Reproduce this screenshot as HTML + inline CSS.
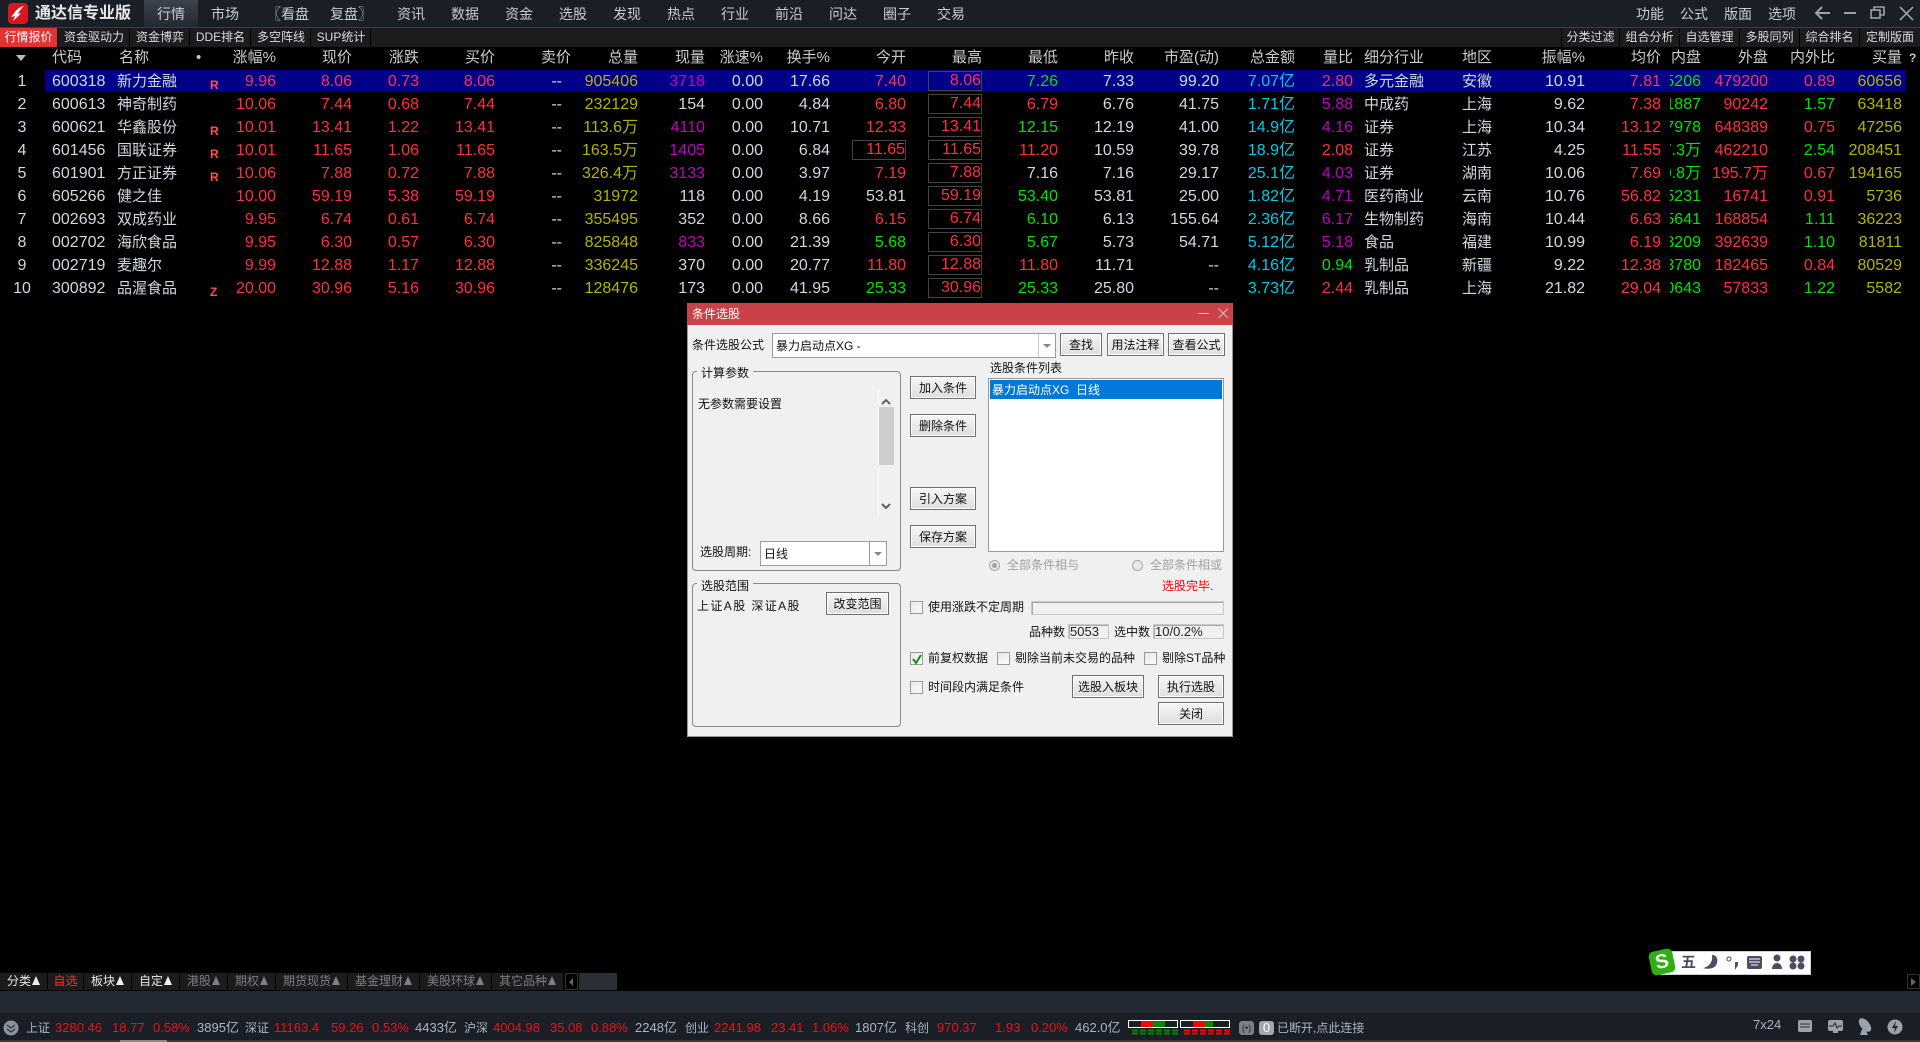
<!DOCTYPE html>
<html lang="zh"><head><meta charset="utf-8"><title>通达信专业版</title>
<style>
html,body{margin:0;padding:0;background:#000}
body{width:1920px;height:1042px;position:relative;overflow:hidden;font-family:"Liberation Sans","Noto Sans CJK SC",sans-serif;color:#d0d8e0}
div,.t{position:absolute;white-space:nowrap;box-sizing:border-box}
/* title */
#top{left:0;top:0;width:1920px;height:28px;background:#1a1f27;border-bottom:1px solid #3a3f46}
.n{top:6px;font-size:14px;line-height:17px;color:#c8ccd0}
#sub{left:0;top:28px;width:1920px;height:19px;background:#1c1c1e}
.s{top:28px;height:19px;font-size:12px;line-height:19px;text-align:center;color:#d8dce0;background:#1c1c1e;border-right:1px solid #000}
/* table */
.h span,.r span{position:absolute;white-space:nowrap}
.h{left:0;top:50px;width:1920px;height:16px;font-size:15px;line-height:16px;color:#c8ccd0}
.r{left:0;width:1920px;height:23px;font-size:16px;line-height:24px;color:#d0d8e0}
.r span:nth-child(1){left:0;width:44px;text-align:center}
.r span:nth-child(2){left:52px}
.r span:nth-child(3){left:117px;font-size:15px}
.r span:nth-child(4){left:210px;top:3px;font-size:12px;font-weight:bold;color:#ff5050}
.r span:nth-child(5){right:1644px}.r span:nth-child(6){right:1568px}.r span:nth-child(7){right:1501px}
.r span:nth-child(8){right:1425px}.r span:nth-child(9){right:1358px}.r span:nth-child(10){right:1282px}
.r span:nth-child(11){right:1215px}.r span:nth-child(12){right:1157px}.r span:nth-child(13){right:1090px}
.r span:nth-child(14){right:1014px}.r span:nth-child(15){right:938px}.r span:nth-child(16){right:862px}
.r span:nth-child(17){right:786px}.r span:nth-child(18){right:701px}.r span:nth-child(19){right:625px}
.r span:nth-child(20){right:567px}.r span:nth-child(21){left:1364px;font-size:15px}.r span:nth-child(22){left:1462px;font-size:15px}
.r span:nth-child(23){right:335px}.r span:nth-child(24){right:259px}
.r span:nth-child(25){left:1670px;width:31px;overflow:hidden;display:flex;justify-content:flex-end}
.r span:nth-child(26){right:152px}.r span:nth-child(27){right:85px}.r span:nth-child(28){right:18px}
.r .bx{box-sizing:border-box;width:54px;height:20px;top:1px;border:1px solid #444;line-height:18px;text-align:right}
.R{color:#ff3038}.G{color:#00e400}.M{color:#c000c0}.O{color:#b4b400}.C{color:#00ccE4}
.sel .R{color:#ff3058}
/* dialog */
#dlg{left:687px;top:303px;width:546px;height:434px;background:#f0f0f0;border:1px solid #999;border-top:0}
.x{font-size:12px;line-height:16px;color:#111}
.btn{font-size:12px;line-height:22px;color:#111;text-align:center;border:1px solid #707070;box-shadow:inset 0 0 0 1px #fff;background:linear-gradient(#f6f6f6,#dedede)}
.grp{border:1px solid #8a8a8a;border-radius:4px}
.gt{font-size:12px;line-height:14px;background:#f0f0f0;padding:0 4px;color:#111}
.ck{left:910px;width:13px;height:13px;border:1px solid #9a9a9a;background:linear-gradient(135deg,#e8e8e8,#fafafa)}
.fld{border:1px solid #c8c8c8;background:#f0f0f0;font-size:13px;line-height:13px;color:#222;padding-left:1px;box-shadow:inset 1px 1px 0 #aaa}
/* bottom */
.b{top:973px;height:17px;background:#1c1c1e;font-size:12px;line-height:17px;text-align:center;color:#7a7f85}
.b i{display:inline-block;width:0;height:0;border-left:4px solid transparent;border-right:4px solid transparent;border-bottom:9px solid #7a7f85;margin-left:1px}
.b.w{color:#e8e8e8}.b.w i{border-bottom-color:#eee}
.st{top:1020px;font-size:13px;line-height:16px;color:#a8b4c4}
.sr{color:#f01010}
</style></head><body>

<div id="top"></div>
<svg style="position:absolute;left:8px;top:3px" width="20" height="21" viewBox="0 0 20 21"><rect width="20" height="21" rx="4" fill="#d8161c"/><path d="M16 3C12 4 9 6 7 9L3 14L7 13L5 18C8 15 11 13 13 10L10 11C11 8 14 5 16 3Z" fill="#fff"/></svg>
<div style="left:35px;top:4px;font-size:16px;line-height:19px;font-weight:bold;color:#e8e8e8">通达信专业版</div>
<div style="left:144px;top:0;width:54px;height:27px;background:linear-gradient(#3c444e,#232932)"></div>
<div class="n" style="left:157px">行情</div>
<div class="n" style="left:211px">市场</div>
<div class="n" style="left:267px">〖看盘</div>
<div class="n" style="left:330px">复盘〗</div>
<div class="n" style="left:397px">资讯</div>
<div class="n" style="left:451px">数据</div>
<div class="n" style="left:505px">资金</div>
<div class="n" style="left:559px">选股</div>
<div class="n" style="left:613px">发现</div>
<div class="n" style="left:667px">热点</div>
<div class="n" style="left:721px">行业</div>
<div class="n" style="left:775px">前沿</div>
<div class="n" style="left:829px">问达</div>
<div class="n" style="left:883px">圈子</div>
<div class="n" style="left:937px">交易</div>
<div class="n" style="left:1636px">功能</div>
<div class="n" style="left:1680px">公式</div>
<div class="n" style="left:1724px">版面</div>
<div class="n" style="left:1768px">选项</div>
<svg style="position:absolute;left:1812px;top:4px" width="106" height="20" viewBox="0 0 106 20" fill="none" stroke="#9aa2ac" stroke-width="1.6"><path d="M18 9H4M10 3L4 9l6 6" stroke-width="2"/><path d="M32 9H44" stroke-width="2"/><rect x="59" y="6" width="9" height="8"/><path d="M62 6V3h10v8h-4"/><path d="M88 3L101 16M101 3L88 16"/></svg>

<div id="sub"></div>
<div class="s" style="left:0;width:58px;background:#e03434;color:#fff">行情报价</div>
<div class="s" style="left:59px;width:71px">资金驱动力</div>
<div class="s" style="left:131px;width:59px">资金博弈</div>
<div class="s" style="left:191px;width:60px">DDE排名</div>
<div class="s" style="left:252px;width:59px">多空阵线</div>
<div class="s" style="left:312px;width:59px">SUP统计</div>
<div class="s" style="left:1561px;width:59px;border-left:1px solid #000">分类过滤</div>
<div class="s" style="left:1620px;width:60px">组合分析</div>
<div class="s" style="left:1680px;width:60px">自选管理</div>
<div class="s" style="left:1740px;width:60px">多股同列</div>
<div class="s" style="left:1800px;width:60px">综合排名</div>
<div class="s" style="left:1860px;width:60px;border-right:0">定制版面</div>

<div class="h">
<span style="left:16px;top:5px;width:0;height:0;border-left:5px solid transparent;border-right:5px solid transparent;border-top:6px solid #b8bcc0"></span>
<span style="left:52px">代码</span><span style="left:119px">名称</span><span style="left:196px">•</span>
<span style="right:1644px">涨幅%</span><span style="right:1568px">现价</span><span style="right:1501px">涨跌</span><span style="right:1425px">买价</span><span style="right:1349px">卖价</span><span style="right:1282px">总量</span><span style="right:1215px">现量</span><span style="right:1157px">涨速%</span><span style="right:1090px">换手%</span><span style="right:1014px">今开</span><span style="right:938px">最高</span><span style="right:862px">最低</span><span style="right:786px">昨收</span><span style="right:701px">市盈(动)</span><span style="right:625px">总金额</span><span style="right:567px">量比</span><span style="left:1364px">细分行业</span><span style="left:1462px">地区</span><span style="right:335px">振幅%</span><span style="right:259px">均价</span><span style="right:219px">内盘</span><span style="right:152px">外盘</span><span style="right:85px">内外比</span><span style="right:18px">买量</span><span style="left:1909px;font-size:12px;font-weight:bold">?</span>
</div>

<div style="left:45px;top:70px;width:1861px;height:22px;background:#000088"></div>
<div class="r sel" style="top:70px"><span>1</span><span>600318</span><span>新力金融</span><span>R</span><span class="R">9.96</span><span class="R">8.06</span><span class="R">0.73</span><span class="R">8.06</span><span>--</span><span class="O">905406</span><span class="M">3718</span><span>0.00</span><span>17.66</span><span class="R">7.40</span><span class="R bx">8.06</span><span class="G">7.26</span><span>7.33</span><span>99.20</span><span class="C">7.07亿</span><span class="R">2.80</span><span>多元金融</span><span>安徽</span><span>10.91</span><span class="R">7.81</span><span class="G">45206</span><span class="R">479200</span><span class="R">0.89</span><span class="O">60656</span></div>
<div class="r" style="top:93px"><span>2</span><span>600613</span><span>神奇制药</span><span></span><span class="R">10.06</span><span class="R">7.44</span><span class="R">0.68</span><span class="R">7.44</span><span>--</span><span class="O">232129</span><span>154</span><span>0.00</span><span>4.84</span><span class="R">6.80</span><span class="R bx">7.44</span><span class="R">6.79</span><span>6.76</span><span>41.75</span><span class="C">1.71亿</span><span class="M">5.88</span><span>中成药</span><span>上海</span><span>9.62</span><span class="R">7.38</span><span class="G">61887</span><span class="R">90242</span><span class="G">1.57</span><span class="O">63418</span></div>
<div class="r" style="top:116px"><span>3</span><span>600621</span><span>华鑫股份</span><span>R</span><span class="R">10.01</span><span class="R">13.41</span><span class="R">1.22</span><span class="R">13.41</span><span>--</span><span class="O">113.6万</span><span class="M">4110</span><span>0.00</span><span>10.71</span><span class="R">12.33</span><span class="R bx">13.41</span><span class="G">12.15</span><span>12.19</span><span>41.00</span><span class="C">14.9亿</span><span class="M">4.16</span><span>证券</span><span>上海</span><span>10.34</span><span class="R">13.12</span><span class="G">57978</span><span class="R">648389</span><span class="R">0.75</span><span class="O">47256</span></div>
<div class="r" style="top:139px"><span>4</span><span>601456</span><span>国联证券</span><span>R</span><span class="R">10.01</span><span class="R">11.65</span><span class="R">1.06</span><span class="R">11.65</span><span>--</span><span class="O">163.5万</span><span class="M">1405</span><span>0.00</span><span>6.84</span><span class="R bx">11.65</span><span class="R bx">11.65</span><span class="R">11.20</span><span>10.59</span><span>39.78</span><span class="C">18.9亿</span><span class="R">2.08</span><span>证券</span><span>江苏</span><span>4.25</span><span class="R">11.55</span><span class="G">17.3万</span><span class="R">462210</span><span class="G">2.54</span><span class="O">208451</span></div>
<div class="r" style="top:162px"><span>5</span><span>601901</span><span>方正证券</span><span>R</span><span class="R">10.06</span><span class="R">7.88</span><span class="R">0.72</span><span class="R">7.88</span><span>--</span><span class="O">326.4万</span><span class="M">3133</span><span>0.00</span><span>3.97</span><span class="R">7.19</span><span class="R bx">7.88</span><span>7.16</span><span>7.16</span><span>29.17</span><span class="C">25.1亿</span><span class="M">4.03</span><span>证券</span><span>湖南</span><span>10.06</span><span class="R">7.69</span><span class="G">10.8万</span><span class="R">195.7万</span><span class="R">0.67</span><span class="O">194165</span></div>
<div class="r" style="top:185px"><span>6</span><span>605266</span><span>健之佳</span><span></span><span class="R">10.00</span><span class="R">59.19</span><span class="R">5.38</span><span class="R">59.19</span><span>--</span><span class="O">31972</span><span>118</span><span>0.00</span><span>4.19</span><span>53.81</span><span class="R bx">59.19</span><span class="G">53.40</span><span>53.81</span><span>25.00</span><span class="C">1.82亿</span><span class="M">4.71</span><span>医药商业</span><span>云南</span><span>10.76</span><span class="R">56.82</span><span class="G">15231</span><span class="R">16741</span><span class="R">0.91</span><span class="O">5736</span></div>
<div class="r" style="top:208px"><span>7</span><span>002693</span><span>双成药业</span><span></span><span class="R">9.95</span><span class="R">6.74</span><span class="R">0.61</span><span class="R">6.74</span><span>--</span><span class="O">355495</span><span>352</span><span>0.00</span><span>8.66</span><span class="R">6.15</span><span class="R bx">6.74</span><span class="G">6.10</span><span>6.13</span><span>155.64</span><span class="C">2.36亿</span><span class="M">6.17</span><span>生物制药</span><span>海南</span><span>10.44</span><span class="R">6.63</span><span class="G">15641</span><span class="R">168854</span><span class="G">1.11</span><span class="O">36223</span></div>
<div class="r" style="top:231px"><span>8</span><span>002702</span><span>海欣食品</span><span></span><span class="R">9.95</span><span class="R">6.30</span><span class="R">0.57</span><span class="R">6.30</span><span>--</span><span class="O">825848</span><span class="M">833</span><span>0.00</span><span>21.39</span><span class="G">5.68</span><span class="R bx">6.30</span><span class="G">5.67</span><span>5.73</span><span>54.71</span><span class="C">5.12亿</span><span class="M">5.18</span><span>食品</span><span>福建</span><span>10.99</span><span class="R">6.19</span><span class="G">43209</span><span class="R">392639</span><span class="G">1.10</span><span class="O">81811</span></div>
<div class="r" style="top:254px"><span>9</span><span>002719</span><span>麦趣尔</span><span></span><span class="R">9.99</span><span class="R">12.88</span><span class="R">1.17</span><span class="R">12.88</span><span>--</span><span class="O">336245</span><span>370</span><span>0.00</span><span>20.77</span><span class="R">11.80</span><span class="R bx">12.88</span><span class="R">11.80</span><span>11.71</span><span>--</span><span class="C">4.16亿</span><span class="G">0.94</span><span>乳制品</span><span>新疆</span><span>9.22</span><span class="R">12.38</span><span class="G">13780</span><span class="R">182465</span><span class="R">0.84</span><span class="O">80529</span></div>
<div class="r" style="top:277px"><span>10</span><span>300892</span><span>品渥食品</span><span>Z</span><span class="R">20.00</span><span class="R">30.96</span><span class="R">5.16</span><span class="R">30.96</span><span>--</span><span class="O">128476</span><span>173</span><span>0.00</span><span>41.95</span><span class="G">25.33</span><span class="R bx">30.96</span><span class="G">25.33</span><span>25.80</span><span>--</span><span class="C">3.73亿</span><span class="R">2.44</span><span>乳制品</span><span>上海</span><span>21.82</span><span class="R">29.04</span><span class="G">10643</span><span class="R">57833</span><span class="G">1.22</span><span class="O">5582</span></div>

<!-- dialog -->
<div id="dlg"></div>
<div style="left:687px;top:303px;width:546px;height:22px;background:#c94247"></div>
<div class="x" style="left:692px;top:306px;color:#fff">条件选股</div>
<svg style="position:absolute;left:1196px;top:306px" width="34" height="14" fill="none" stroke="#e8c0c0"><path d="M2 7.5H13M22.5 2.5L32 12M32 2.500L22.500 12"/></svg>

<div class="x" style="left:692px;top:337px">条件选股公式</div>
<div style="left:772px;top:333px;width:284px;height:25px;background:#fff;border:1px solid #9a9a9a"></div>
<div style="left:1038px;top:334px;width:1px;height:23px;background:#c8c8c8"></div>
<div style="left:1043px;top:344px;width:0;height:0;border-left:4px solid transparent;border-right:4px solid transparent;border-top:4px solid #888"></div>
<div class="x" style="left:776px;top:338px">暴力启动点XG -</div>
<div class="btn" style="left:1060px;top:333px;width:42px;height:23px">查找</div>
<div class="btn" style="left:1107px;top:333px;width:57px;height:23px">用法注释</div>
<div class="btn" style="left:1168px;top:333px;width:57px;height:23px">查看公式</div>

<div class="grp" style="left:692px;top:371px;width:209px;height:200px"></div>
<div class="gt" style="left:697px;top:366px">计算参数</div>
<div class="x" style="left:698px;top:396px">无参数需要设置</div>
<div style="left:878px;top:390px;width:1px;height:125px;background:#fff"></div>
<div style="left:879px;top:407px;width:15px;height:58px;background:#cdcdcd"></div>
<svg style="position:absolute;left:880px;top:396px" width="12" height="116" fill="none" stroke="#606060" stroke-width="2"><path d="M2 8L6 4L10 8M2 108L6 112L10 108"/></svg>
<div class="x" style="left:700px;top:544px">选股周期:</div>
<div style="left:760px;top:541px;width:127px;height:25px;background:#fff;border:1px solid #9a9a9a"></div>
<div style="left:869px;top:542px;width:1px;height:23px;background:#9a9a9a"></div>
<div style="left:874px;top:552px;width:0;height:0;border-left:4px solid transparent;border-right:4px solid transparent;border-top:4px solid #888"></div>
<div class="x" style="left:764px;top:546px">日线</div>

<div class="grp" style="left:692px;top:583px;width:209px;height:144px"></div>
<div class="gt" style="left:697px;top:579px">选股范围</div>
<div class="x" style="left:697px;top:598px;letter-spacing:1.4px">上证A股 深证A股</div>
<div class="btn" style="left:826px;top:592px;width:63px;height:23px">改变范围</div>

<div class="btn" style="left:910px;top:376px;width:66px;height:23px">加入条件</div>
<div class="btn" style="left:910px;top:414px;width:66px;height:23px">删除条件</div>
<div class="btn" style="left:910px;top:487px;width:66px;height:23px">引入方案</div>
<div class="btn" style="left:910px;top:525px;width:66px;height:23px">保存方案</div>

<div class="x" style="left:990px;top:360px">选股条件列表</div>
<div style="left:988px;top:378px;width:236px;height:174px;background:#fff;border:1px solid #9a9a9a"></div>
<div class="x" style="left:990px;top:380px;width:232px;height:19px;background:#0078d7;color:#fff;line-height:20px;padding-left:2px">暴力启动点XG&nbsp; 日线</div>

<div style="left:989px;top:560px;width:11px;height:11px;border-radius:50%;border:1px solid #a8a8a8;background:#e8e8e8"></div>
<div style="left:992px;top:563px;width:5px;height:5px;border-radius:50%;background:#a0a0a0"></div>
<div class="x" style="left:1007px;top:557px;color:#a0a0a0">全部条件相与</div>
<div style="left:1132px;top:560px;width:11px;height:11px;border-radius:50%;border:1px solid #a8a8a8;background:#e8e8e8"></div>
<div class="x" style="left:1150px;top:557px;color:#a0a0a0">全部条件相或</div>
<div class="x" style="left:1162px;top:578px;color:#f00">选股完毕.</div>

<div class="ck" style="top:601px"></div>
<div class="x" style="left:928px;top:599px">使用涨跌不定周期</div>
<div class="fld" style="left:1031px;top:601px;width:193px;height:14px"></div>
<div class="x" style="left:1029px;top:624px">品种数</div>
<div class="fld" style="left:1068px;top:624px;width:41px;height:15px">5053</div>
<div class="x" style="left:1114px;top:624px">选中数</div>
<div class="fld" style="left:1153px;top:624px;width:71px;height:15px">10/0.2%</div>

<div class="ck" style="top:652px"></div>
<svg style="position:absolute;left:911px;top:653px" width="12" height="12" fill="none" stroke="#1a8a1a" stroke-width="2"><path d="M2 6L5 10L10 2"/></svg>
<div class="x" style="left:928px;top:650px">前复权数据</div>
<div class="ck" style="left:997px;top:652px"></div>
<div class="x" style="left:1015px;top:650px">剔除当前未交易的品种</div>
<div class="ck" style="left:1144px;top:652px"></div>
<div class="x" style="left:1162px;top:650px">剔除ST品种</div>
<div class="ck" style="top:681px"></div>
<div class="x" style="left:928px;top:679px">时间段内满足条件</div>
<div class="btn" style="left:1072px;top:675px;width:72px;height:23px">选股入板块</div>
<div class="btn" style="left:1158px;top:675px;width:66px;height:23px">执行选股</div>
<div class="btn" style="left:1158px;top:702px;width:66px;height:23px">关闭</div>

<!-- sogou -->
<div style="left:1660px;top:951px;width:151px;height:24px;background:#fff;border:1px solid #c8d0e0"></div>
<div style="left:1650px;top:950px;width:24px;height:24px;background:#2fb012;border-radius:5px;transform:rotate(-12deg);color:#fff;font-weight:bold;font-size:20px;line-height:24px;text-align:center">S</div>
<div style="left:1681px;top:954px;font-size:15px;line-height:18px;color:#4a4e60;font-weight:bold">五</div>
<svg style="position:absolute;left:1702px;top:953px" width="106" height="20" fill="#4a4e60"><path d="M10 2C15 2 16 6 15 10C14 15 8 17 1 15C7 14 11 9 10 2Z"/><circle cx="27" cy="6" r="2" fill="none" stroke="#4a4e60"/><path d="M33 9h3v3l-3 5z"/><rect x="45" y="3" width="15" height="13" rx="2"/><path d="M47 6h11M47 9h11M49 12h7" stroke="#fff"/><circle cx="75" cy="5" r="3.500"/><path d="M70 16c0-8 10-8 10 0z"/><circle cx="91" cy="6" r="3.500"/><circle cx="99" cy="6" r="3.500"/><circle cx="91" cy="13" r="3.500"/><circle cx="99" cy="13" r="3.500"/></svg>
<div style="left:1907px;top:974px;width:13px;height:15px;border:1px solid #333"></div>
<div style="left:1911px;top:978px;width:0;height:0;border-top:4px solid transparent;border-bottom:4px solid transparent;border-left:5px solid #666"></div>

<!-- bottom tabs -->
<div class="b w" style="left:0;width:47px">分类<i></i></div>
<div class="b" style="left:48px;width:35px;color:#f03030">自选</div>
<div class="b w" style="left:84px;width:47px">板块<i></i></div>
<div class="b w" style="left:132px;width:47px">自定<i></i></div>
<div class="b" style="left:180px;width:47px">港股<i></i></div>
<div class="b" style="left:228px;width:47px">期权<i></i></div>
<div class="b" style="left:276px;width:71px">期货现货<i></i></div>
<div class="b" style="left:348px;width:71px">基金理财<i></i></div>
<div class="b" style="left:420px;width:71px">美股环球<i></i></div>
<div class="b" style="left:492px;width:71px">其它品种<i></i></div>
<div style="left:565px;top:973px;width:13px;height:17px;border:1px solid #333"></div>
<div style="left:569px;top:978px;width:0;height:0;border-top:4px solid transparent;border-bottom:4px solid transparent;border-right:4px solid #666"></div>
<div style="left:579px;top:973px;width:38px;height:17px;background:#2a2e35"></div>

<div style="left:0;top:991px;width:1920px;height:22px;background:#232a33"></div>
<div style="left:0;top:1013px;width:1920px;height:27px;background:#1a1f27"></div>
<div style="left:0;top:1040px;width:1920px;height:2px;background:#3a3a2c"></div>
<div style="left:120px;top:1040px;width:47px;height:2px;background:#888"></div>

<svg style="position:absolute;left:3px;top:1020px" width="16" height="16" fill="none"><circle cx="8" cy="8" r="7.500" fill="#8a93a0"/><path d="M4 5l4 3 4-3M4 9l4 3 4-3" stroke="#333" stroke-width="1.200"/></svg>
<div class="t st" style="left:26px;font-size:12px">上证</div>
<div class="t st sr" style="left:55px">3280.46</div><div class="t st sr" style="left:112px">18.77</div><div class="t st sr" style="left:153px">0.58%</div><div class="t st" style="left:197px">3895亿</div>
<div class="t st" style="left:245px;font-size:12px">深证</div>
<div class="t st sr" style="left:274px">11163.4</div><div class="t st sr" style="left:331px">59.26</div><div class="t st sr" style="left:372px">0.53%</div><div class="t st" style="left:415px">4433亿</div>
<div class="t st" style="left:464px;font-size:12px">沪深</div>
<div class="t st sr" style="left:493px">4004.98</div><div class="t st sr" style="left:550px">35.08</div><div class="t st sr" style="left:591px">0.88%</div><div class="t st" style="left:635px">2248亿</div>
<div class="t st" style="left:685px;font-size:12px">创业</div>
<div class="t st sr" style="left:714px">2241.98</div><div class="t st sr" style="left:771px">23.41</div><div class="t st sr" style="left:812px">1.06%</div><div class="t st" style="left:855px">1807亿</div>
<div class="t st" style="left:905px;font-size:12px">科创</div>
<div class="t st sr" style="left:937px">970.37</div><div class="t st sr" style="left:995px">1.93</div><div class="t st sr" style="left:1031px">0.20%</div><div class="t st" style="left:1075px">462.0亿</div>

<svg style="position:absolute;left:1128px;top:1020px" width="103" height="15">
<g fill="none" stroke="#fff"><rect x=".5" y=".5" width="49" height="7"/><rect x="52.500" y=".5" width="49" height="7"/></g>
<rect x="13" y="1" width="12" height="6" fill="#f00"/><rect x="25" y="1" width="12" height="6" fill="#080"/><rect x="65" y="1" width="12" height="6" fill="#f00"/><rect x="77" y="1" width="8" height="6" fill="#080"/>
<path d="M4 10.500h46M4 13.500h46" stroke="#080" stroke-width="2" stroke-dasharray="6 2"/><path d="M56 10.500h46M56 13.500h46" stroke="#f00" stroke-width="2" stroke-dasharray="6 2"/></svg>
<div style="left:1239px;top:1021px;width:15px;height:14px;background:#7a808a;border-radius:3px;color:#222;font-size:9px;line-height:14px;text-align:center">(•)</div>
<div style="left:1259px;top:1021px;width:15px;height:14px;background:#a0a8b4;border-radius:3px;color:#fff;font-size:13px;line-height:14px;text-align:center">0</div>
<div class="t st" style="left:1277px;font-size:12px">已断开,点此连接</div>
<div class="t st" style="left:1753px;top:1017px;font-size:13px">7x24</div>
<svg style="position:absolute;left:1798px;top:1018px" width="106" height="18"><rect y="2" width="14" height="12" rx="2" fill="#9aa2ae"/><path d="M2 6h10M2 9h10" stroke="#333"/><rect x="30" y="2" width="15" height="11" rx="2" fill="#9aa2ae"/><path d="M31 8h4l2-3 2 5 2-2h3" stroke="#222" fill="none"/><path d="M35 14h5" stroke="#9aa2ae" stroke-width="2"/><ellipse cx="67" cy="7" rx="8" ry="4.500" transform="rotate(50 67 7)" fill="#9aa2ae"/><path d="M64 11l-2 6h8l-2-4z" fill="#9aa2ae"/><circle cx="97" cy="9" r="7.500" fill="#9aa2ae"/><path d="M98 3l-4 7h3l-1 5 4-7h-3z" fill="#1a1f27"/></svg>
</body></html>
